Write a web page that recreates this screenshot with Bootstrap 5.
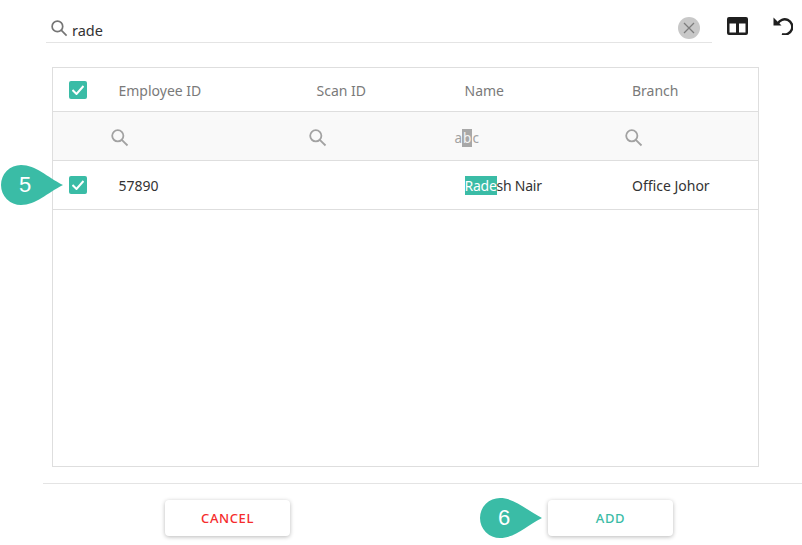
<!DOCTYPE html>
<html lang="en">
<head>
<meta charset="utf-8">
<title>Add employee</title>
<link href="https://cdn.jsdelivr.net/npm/bootstrap@5.3.0/dist/css/bootstrap.min.css" rel="stylesheet">
<style>
html,body{height:100%;overflow:hidden}
body{font-family:"Noto Sans","Open Sans",sans-serif;font-size:14px;color:#333;background:#fff}
.shell{position:relative;width:802px;height:545px}
.searchrow{height:67px;padding-left:46px}
.searchbox{width:666px;height:43px;border-bottom:1px solid #e4e4e4;padding:0 12px 3px 5px}
.searchbox>svg{margin-bottom:2px}
.searchbox span{font-size:14.5px;margin-left:4px;line-height:20px;position:relative;top:1px}
.clearbtn{width:22px;height:22px;border-radius:50%;background:#c8c8c8}
.tools{margin-left:15px;gap:25px;height:43px;padding-top:9px}
.gridframe{margin-left:52px;width:707px;height:400px;border:1px solid #dedede}
.emp{table-layout:fixed;border-collapse:collapse;width:705px;margin:0}
.emp th,.emp td{padding:0;vertical-align:middle;border-bottom:1px solid #dedede;font-weight:400;white-space:nowrap}
.emp th{height:43px;color:#7a7a7a}
.emp th.lbl{padding-top:3px}
.emp th.boxcell,.emp td.boxcell{padding-top:1px}
.emp .filters td{height:49px;background:#f9f9f9;padding-top:4px}
.emp .datarow td{height:49px}
.emp .datarow td.val{padding-top:1px}
.emp .datarow td.namecell{letter-spacing:-.25px}
.check{width:18px;height:18px;border-radius:2px;background:#3abca6;margin-left:16px}
.fi{display:block;margin-left:-7.500px}
.abc{color:#a2a2a2;margin-left:-10px;font-size:13.5px}
.abc b{font-weight:400;background:#a8a8a8;color:#f4f4f4;padding:0 1px}
.hit{background:#3abca6;color:#fff}
.foot{margin-top:16px;margin-left:43px;border-top:1px solid #e4e4e4;height:62px;padding-top:16px}
.act{width:125px;height:36px;border-radius:4px;background:#fff;border:0;box-shadow:0 1px 4px rgba(0,0,0,.28);font-size:13px;font-weight:500;letter-spacing:.6px;padding:1px 0 0}
.act-cancel{color:#f52c2c;margin-left:122px}
.act-add{color:#3abca6;margin-left:258px}
.pin{position:absolute;width:62px;height:40px;color:#fff;font-family:"Liberation Sans",sans-serif;font-size:22px}
.pin svg{position:absolute;left:0;top:0}
.pin span{position:absolute;left:0;top:0;width:40px;line-height:40px;text-align:center;margin-left:4px}
.pin5{left:1px;top:165px}
.pin6{left:480px;top:498px}
</style>
</head>
<body>
<div class="shell">
  <div class="searchrow d-flex align-items-start">
    <div class="searchbox d-flex align-items-end">
      <svg width="17" height="17" viewBox="0 0 18 18" fill="none" stroke="#757575" stroke-width="1.8"><circle cx="6.800" cy="6.800" r="5.600"/><path d="M10.800 10.800 16.500 16.500"/></svg>
      <span class="flex-grow-1">rade</span>
      <div class="clearbtn d-flex align-items-center justify-content-center">
        <svg width="12" height="12" viewBox="0 0 12 12" stroke="#7d7d7d" stroke-width="1.3"><path d="M1 1 11 11M11 1 1 11"/></svg>
      </div>
    </div>
    <div class="tools d-flex align-items-center">
      <svg width="21" height="18" viewBox="0 0 21 18"><path fill="#1f1f1f" fill-rule="evenodd" d="M2 0h17a2 2 0 0 1 2 2v14a2 2 0 0 1-2 2H2a2 2 0 0 1-2-2V2a2 2 0 0 1 2-2ZM2.500 6.500v9h6.500v-9Zm9.500 0v9h6.500v-9Z"/></svg>
      <svg width="20" height="18" viewBox="0 0 20 18" fill="none" stroke="#1f1f1f" stroke-width="2.400"><path d="M4.800 6.600A7.600 7.600 0 1 1 9 17"/><path fill="#1f1f1f" stroke="none" d="M0.500 0.500v8h8Z"/></svg>
    </div>
  </div>
  <div class="gridframe">
    <table class="emp">
      <colgroup><col style="width:65.5px"><col style="width:198px"><col style="width:148px"><col style="width:167.500px"><col></colgroup>
      <thead>
        <tr>
          <th class="boxcell"><div class="check d-flex align-items-center justify-content-center"><svg width="12" height="10" viewBox="0 0 12 10" fill="none" stroke="#fff" stroke-width="2"><path d="M.5 5 4.500 9 11.500 1"/></svg></div></th>
          <th class="lbl">Employee ID</th><th class="lbl">Scan ID</th><th class="lbl">Name</th><th class="lbl">Branch</th>
        </tr>
      </thead>
      <tbody>
        <tr class="filters">
          <td></td>
          <td><svg class="fi" width="18" height="18" viewBox="0 0 18 18" fill="none" stroke="#a2a2a2" stroke-width="1.800"><circle cx="6.800" cy="6.800" r="5.600"/><path d="M10.800 10.800 16.500 16.500"/></svg></td>
          <td><svg class="fi" width="18" height="18" viewBox="0 0 18 18" fill="none" stroke="#a2a2a2" stroke-width="1.800"><circle cx="6.800" cy="6.800" r="5.600"/><path d="M10.800 10.800 16.500 16.500"/></svg></td>
          <td><span class="abc">a<b>b</b>c</span></td>
          <td><svg class="fi" width="18" height="18" viewBox="0 0 18 18" fill="none" stroke="#a2a2a2" stroke-width="1.800"><circle cx="6.800" cy="6.800" r="5.600"/><path d="M10.800 10.800 16.500 16.500"/></svg></td>
        </tr>
        <tr class="datarow">
          <td class="boxcell"><div class="check d-flex align-items-center justify-content-center"><svg width="12" height="10" viewBox="0 0 12 10" fill="none" stroke="#fff" stroke-width="2"><path d="M.5 5 4.500 9 11.500 1"/></svg></div></td>
          <td class="val">57890</td><td class="val"></td><td class="val namecell"><span class="hit">Rade</span>sh Nair</td><td class="val">Office Johor</td>
        </tr>
      </tbody>
    </table>
  </div>
  <div class="foot d-flex align-items-start">
    <button type="button" class="btn act act-cancel">CANCEL</button>
    <button type="button" class="btn act act-add">ADD</button>
  </div>
  <div class="pin pin5"><svg width="62" height="40" viewBox="0 0 62 40"><path fill="#3abca6" d="M20 0C35 0 46 12 62 20 46 28 35 40 20 40A20 20 0 0 1 20 0Z"/></svg><span>5</span></div>
  <div class="pin pin6"><svg width="62" height="40" viewBox="0 0 62 40"><path fill="#3abca6" d="M20 0C35 0 46 12 62 20 46 28 35 40 20 40A20 20 0 0 1 20 0Z"/></svg><span>6</span></div>
</div>
<script src="https://cdn.jsdelivr.net/npm/bootstrap@5.3.0/dist/js/bootstrap.bundle.min.js"></script>
</body>
</html>
